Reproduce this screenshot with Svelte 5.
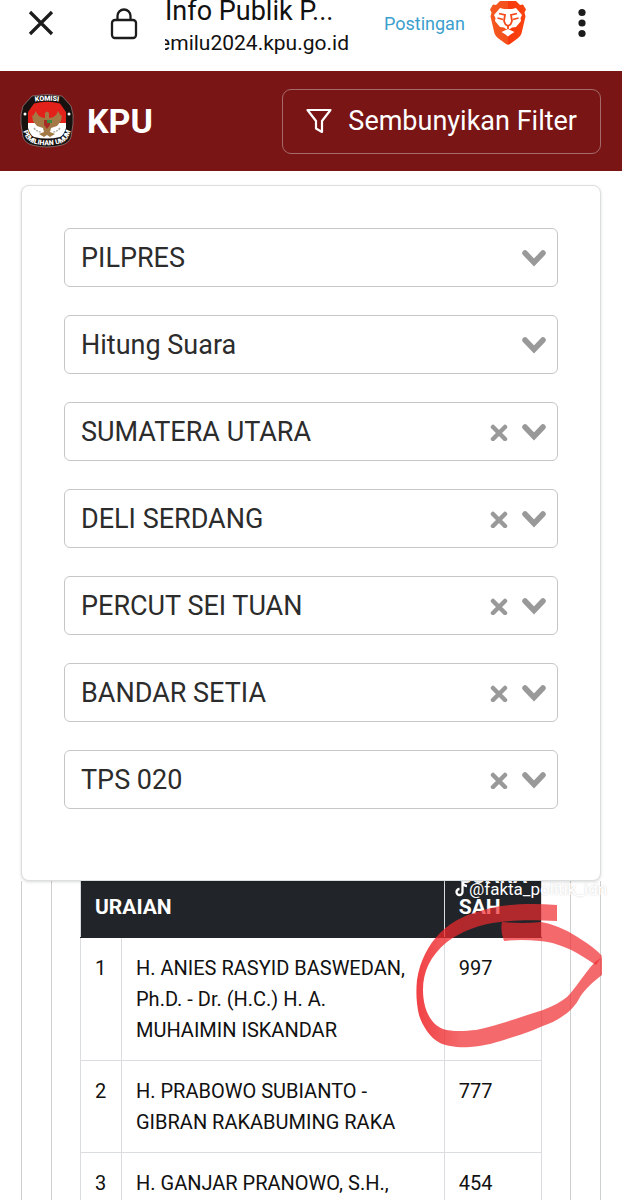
<script lang="ts">
	type Filter = { id: string; label: string; value: string; clearable: boolean };

	let filters: Filter[] = $state([
		{ id: 'pemilihan', label: 'Pemilihan', value: 'PILPRES', clearable: false },
		{ id: 'tahap', label: 'Tahapan', value: 'Hitung Suara', clearable: false },
		{ id: 'provinsi', label: 'Provinsi', value: 'SUMATERA UTARA', clearable: true },
		{ id: 'kabupaten', label: 'Kabupaten', value: 'DELI SERDANG', clearable: true },
		{ id: 'kecamatan', label: 'Kecamatan', value: 'PERCUT SEI TUAN', clearable: true },
		{ id: 'kelurahan', label: 'Kelurahan', value: 'BANDAR SETIA', clearable: true },
		{ id: 'tps', label: 'TPS', value: 'TPS 020', clearable: true }
	]);

	const rows = [
		{ no: 1, name: 'H. ANIES RASYID BASWEDAN, Ph.D. - Dr. (H.C.) H. A. MUHAIMIN ISKANDAR', votes: 997 },
		{ no: 2, name: 'H. PRABOWO SUBIANTO - GIBRAN RAKABUMING RAKA', votes: 777 },
		{ no: 3, name: 'H. GANJAR PRANOWO, S.H.,', votes: 454 }
	];

	function clear(filter: Filter) {
		filter.value = '';
	}
</script>

<div class="page">
	<div class="browser">
		<button class="icon close" aria-label="Tutup">
			<svg width="26" height="26" viewBox="0 0 26 26">
				<path d="M2 2 24 24M24 2 2 24" fill="none" stroke="#1c1c1c" stroke-width="3.2" />
			</svg>
		</button>
		<button class="icon lock" aria-label="Info situs">
			<svg width="28" height="32" viewBox="0 0 28 32">
				<path d="M7.5 12V8a6.500 6.500 0 0 1 13 0V12" fill="none" stroke="#1c1c1c" stroke-width="2.3" />
				<rect x="2" y="12" width="24" height="18" rx="3" fill="none" stroke="#1c1c1c" stroke-width="2.3" />
			</svg>
		</button>
		<div class="site">
			<div class="title">Info Publik P...</div>
			<div class="url"><span>emilu2024.kpu.go.id</span></div>
		</div>
		<a class="post" href="#postingan">Postingan</a>
		<svg class="brave" width="38" height="45" viewBox="0 0 38 45">
			<defs>
				<linearGradient id="lion" x1="0" x2="1">
					<stop offset="0" stop-color="#f4581f" />
					<stop offset="0.5" stop-color="#f4511c" />
					<stop offset="0.5" stop-color="#f7380c" />
					<stop offset="1" stop-color="#fb4410" />
				</linearGradient>
			</defs>
			<path
				d="M11 1h16l4 4 3-.5 3 5-1.500 3 1 4-4 17q-1 3-4 5l-7.500 5.500q-2 1.300-4 0L9.500 38.500q-3-2-4-5L1.500 16.500l1-4L1 9.500l3-5 3 .5z"
				fill="url(#lion)"
			/>
			<path
				d="M11 8l4 1h8l4-1 6 7-1.500 3 .5 3-5 6-4 .5-2 1.500h-4l-2-1.500-4-.5-5-6 .5-3L5 15z"
				fill="#fff"
			/>
			<path d="M12.500 32l6.500-3 6.500 3-4 2.500-2.500 2-2.500-2z" fill="#fff" />
			<path
				d="M10 13.500l6 1.500-1 6 1.500 3.500L19 26l2.500-1.500L23 21l-1-6 6-1.500M8.500 18l5.500 1.500M29.500 18L24 19.500M19 26v3"
				fill="none"
				stroke="#f4491a"
				stroke-width="1.800"
			/>
		</svg>
		<button class="icon more" aria-label="Menu">
			<svg width="8" height="30" viewBox="0 0 8 30">
				<circle cx="4" cy="4.500" r="3.600" />
				<circle cx="4" cy="15" r="3.600" />
				<circle cx="4" cy="25.500" r="3.600" />
			</svg>
		</button>
	</div>

	<header>
		<svg class="logo" width="54" height="54" viewBox="0 0 54 54">
			<defs>
				<clipPath id="shield">
					<path d="M14 9.500Q27 6 40 9.500L46 18V34Q44 41 40 43Q27 46 14 43Q10 41 8 34V18z" />
				</clipPath>
				<path id="arc-top" d="M8 8.500Q27 5 46 8.500" />
				<path id="arc-bottom" d="M1.500 24Q2 46 14 49.500Q27 53 40 49.500Q52 46 52.500 24" />
			</defs>
			<path
				d="M12 2Q27-1 42 2L51 12Q54 20 53 30L51 43Q49 49 42 51Q27 55 12 51Q5 49 3 43L1 30Q0 20 3 12z"
				fill="#17110f"
				stroke="#a99"
				stroke-width=".6"
			/>
			<g clip-path="url(#shield)">
				<rect width="54" height="29" fill="#e3211b" />
				<rect y="29" width="54" height="25" fill="#fff" />
			</g>
			<path
				d="M25 19q2-3 4 0l0 5q7 0 9-7l3 5 1-1-1 6-4 5-6 2-1 4 5 2-5 3-3-2-3 2-5-3 5-2-1-4-6-2-4-5-1-6 1 1 3-5q2 7 9 7z"
				fill="#a37a45"
			/>
			<path d="M24 26h6v5l-3 4-3-4z" fill="#a92c24" />
			<path d="M27 26h5v3h-5z" fill="#3f8a43" />
			<path d="M14 34q3 4 7 4M40 34q-3 4-7 4" fill="none" stroke="#aaa79c" stroke-width="1.500" stroke-dasharray="2 1" />
			<circle cx="5" cy="20" r="1.500" fill="#fff" />
			<circle cx="49" cy="20" r="1.500" fill="#fff" />
			<text class="seal"><textPath href="#arc-top" startOffset="50%">KOMISI</textPath></text>
			<text class="seal"><textPath href="#arc-bottom" startOffset="50%">PEMILIHAN UMUM</textPath></text>
		</svg>
		<span class="brand">KPU</span>
		<button class="toggle">
			<svg width="26" height="26" viewBox="0 0 26 26">
				<path d="M1.500 2h23L16 13v11l-6-3.500V13z" fill="none" stroke="#fff" stroke-width="2.200" stroke-linejoin="round" />
			</svg>
			Sembunyikan Filter
		</button>
	</header>

	<form class="filters">
		{#each filters as filter (filter.id)}
			<div class="field">
				<select id={filter.id} aria-label={filter.label} bind:value={filter.value}>
					<option value={filter.value}>{filter.value}</option>
				</select>
				{#if filter.clearable}
					<button type="button" class="icon clear" aria-label="Hapus {filter.label}" onclick={() => clear(filter)}>
						<svg width="18" height="18" viewBox="0 0 18 18">
							<path d="M3 4 15 16M15 4 3 16" fill="none" stroke="#999" stroke-width="4.500" stroke-linecap="round" />
						</svg>
					</button>
				{/if}
				<svg class="chevron" width="24" height="18" viewBox="0 0 24 18">
					<path d="M3 4 12 13.500 21 4" fill="none" stroke="#999" stroke-width="5.500" stroke-linecap="round" />
				</svg>
			</div>
		{/each}
	</form>

	<main>
		<div class="outer">
			<div class="inner">
				<table>
					<thead>
						<tr>
							<th colspan="2">URAIAN</th>
							<th class="votes">SUARA SAH</th>
						</tr>
					</thead>
					<tbody>
						{#each rows as row (row.no)}
							<tr>
								<td class="no">{row.no}</td>
								<td>{row.name}</td>
								<td class="votes">{row.votes}</td>
							</tr>
						{/each}
					</tbody>
				</table>
			</div>
		</div>

		<div class="watermark">
			<svg width="13" height="16" viewBox="0 0 13 16">
				<path d="M7.500 1v10a3 3 0 1 1-3-3M7.500 1q.5 3.500 4.500 4" fill="none" stroke="#fff" stroke-width="2.300" />
			</svg>
			<span>@fakta_politik_idn</span>
		</div>

		<!-- marker drawn round the first count -->
		<svg class="marker" width="190" height="150" viewBox="414 900 190 150">
			<defs>
				<linearGradient id="ink" x1="0" x2="1">
					<stop offset="0" stop-color="#ee2024" stop-opacity=".85" />
					<stop offset="0.25" stop-color="#ef2a2d" stop-opacity=".7" />
					<stop offset="1" stop-color="#ef2a2d" stop-opacity=".7" />
				</linearGradient>
			</defs>
			<path
				d="M557 905V921C535 920 515 920 500 922C480 924 460 932 447 942C430 956 423 972 423 990C423 1008 430 1024 443 1029C452 1032 465 1031 476 1030C500 1025 520 1017 543 1010C553 1006 561 1002 567 997C576 988 583 975 595 962L602 957V975C592 983 586 988 580 997C575 1007 568 1014 553 1022C540 1027 525 1034 510 1038C498 1042 485 1046 470 1047C458 1048 447 1046 440 1043C430 1038 422 1025 419 1015C416 1002 416 990 417 980C420 961 428 945 440 933C453 920 468 914 487 909C505 904 530 903 557 905z"
				fill="url(#ink)"
			/>
			<path
				d="M502 922Q522 924 541 922C558 925 570 932 582 940C590 945 597 950 602 956L596 965C588 960 584 957 575 952C564 946 552 942 540 941Q520 939 504 941Q500 931 502 922z"
				fill="#ef2a2d"
				fill-opacity=".7"
			/>
		</svg>
	</main>
</div>

<style>
	:global(body) {
		margin: 0;
		background: #fff;
	}
	.page {
		display: flex;
		flex-direction: column;
		height: 100vh;
		overflow: hidden;
		font-family: Roboto, 'Liberation Sans', sans-serif;
		color: #111;
	}
	button,
	select {
		font: inherit;
		color: inherit;
		background: none;
		border: none;
		padding: 0;
		margin: 0;
	}
	svg {
		display: block;
		flex: none;
	}
	.icon {
		display: flex;
		flex: none;
	}

	.browser {
		display: flex;
		align-items: flex-start;
		flex: none;
		box-sizing: border-box;
		height: 71px;
		padding: 0 36px 0 28px;
	}
	.close {
		margin-top: 10px;
	}
	.lock {
		margin: 8px 0 0 56px;
	}
	.site {
		width: 184px;
		margin-left: 27px;
		white-space: nowrap;
	}
	.title {
		font-size: 27px;
		line-height: 22px;
	}
	.url {
		display: flex;
		justify-content: flex-end;
		overflow: hidden;
		font-size: 21px;
		line-height: 42px;
	}
	.post {
		margin: 12px 0 0 35px;
		font-size: 18px;
		line-height: 24px;
		color: #3ba0cd;
		text-decoration: none;
	}
	.brave {
		margin-left: 24px;
	}
	.more {
		margin: 8px 0 0 auto;
		fill: #1c1c1c;
	}

	header {
		display: flex;
		align-items: center;
		flex: none;
		box-sizing: border-box;
		height: 100px;
		padding: 0 21px 0 20px;
		background: #791515;
		color: #fff;
	}
	.seal {
		font-size: 7px;
		font-weight: 900;
		fill: #fff;
		text-anchor: middle;
	}
	.brand {
		margin-left: 13px;
		font-size: 34px;
		font-weight: 700;
	}
	.toggle {
		display: flex;
		align-items: center;
		justify-content: center;
		gap: 16px;
		box-sizing: border-box;
		height: 65px;
		margin-left: auto;
		padding: 0 23px;
		border: 1px solid #a56a6a;
		border-radius: 9px;
		font-size: 27px;
	}

	.filters {
		display: flex;
		flex-direction: column;
		gap: 28px;
		flex: none;
		position: relative;
		z-index: 1;
		margin: 14px 21px 0;
		padding: 42px;
		padding-bottom: 71px;
		border: 1px solid #dcdfe0;
		border-radius: 8px;
		background: #fff;
		box-shadow: 0 1px 3px rgba(0, 0, 0, 0.15);
	}
	.field {
		display: flex;
		align-items: center;
		box-sizing: border-box;
		height: 59px;
		padding: 0 11px 0 16px;
		border: 1px solid #c6c6c6;
		border-radius: 6px;
	}
	select {
		flex: 1;
		min-width: 0;
		height: 100%;
		appearance: none;
		font-size: 27px;
		color: #2c2c2c;
	}
	.clear {
		margin-right: 14px;
	}

	main {
		flex: 1;
		position: relative;
		min-height: 0;
	}
	.outer,
	.inner {
		border: solid #cdd0d1;
		border-width: 0 1px;
	}
	.outer {
		height: 100%;
		margin: 0 21px;
		padding: 0 29px;
		overflow: hidden;
		box-sizing: border-box;
	}
	.inner {
		display: flow-root;
		height: 100%;
		padding: 0 28px;
	}
	/* scrolled up a little under the filter card */
	table {
		width: 100%;
		margin-top: -36px;
		border-collapse: collapse;
		font-size: 20px;
		line-height: 31px;
	}
	th,
	td {
		padding: 15px 14px 14px;
		border: 1px solid #d9dddf;
		text-align: left;
		vertical-align: top;
	}
	th {
		border-color: #212529 #d9dddf;
		background: #212529;
		color: #fff;
		font-size: 21px;
		vertical-align: bottom;
	}
	.no {
		width: 12px;
	}
	.votes {
		width: 68px;
	}

	.watermark {
		display: flex;
		align-items: center;
		gap: 1px;
		position: absolute;
		top: -3px;
		left: 455px;
		z-index: 2;
		font-size: 17px;
		line-height: 22px;
		color: #fff;
		text-shadow: 0 0 2px rgba(0, 0, 0, 0.2);
	}
	.marker {
		position: absolute;
		top: 19px;
		left: 414px;
		pointer-events: none;
	}
</style>
